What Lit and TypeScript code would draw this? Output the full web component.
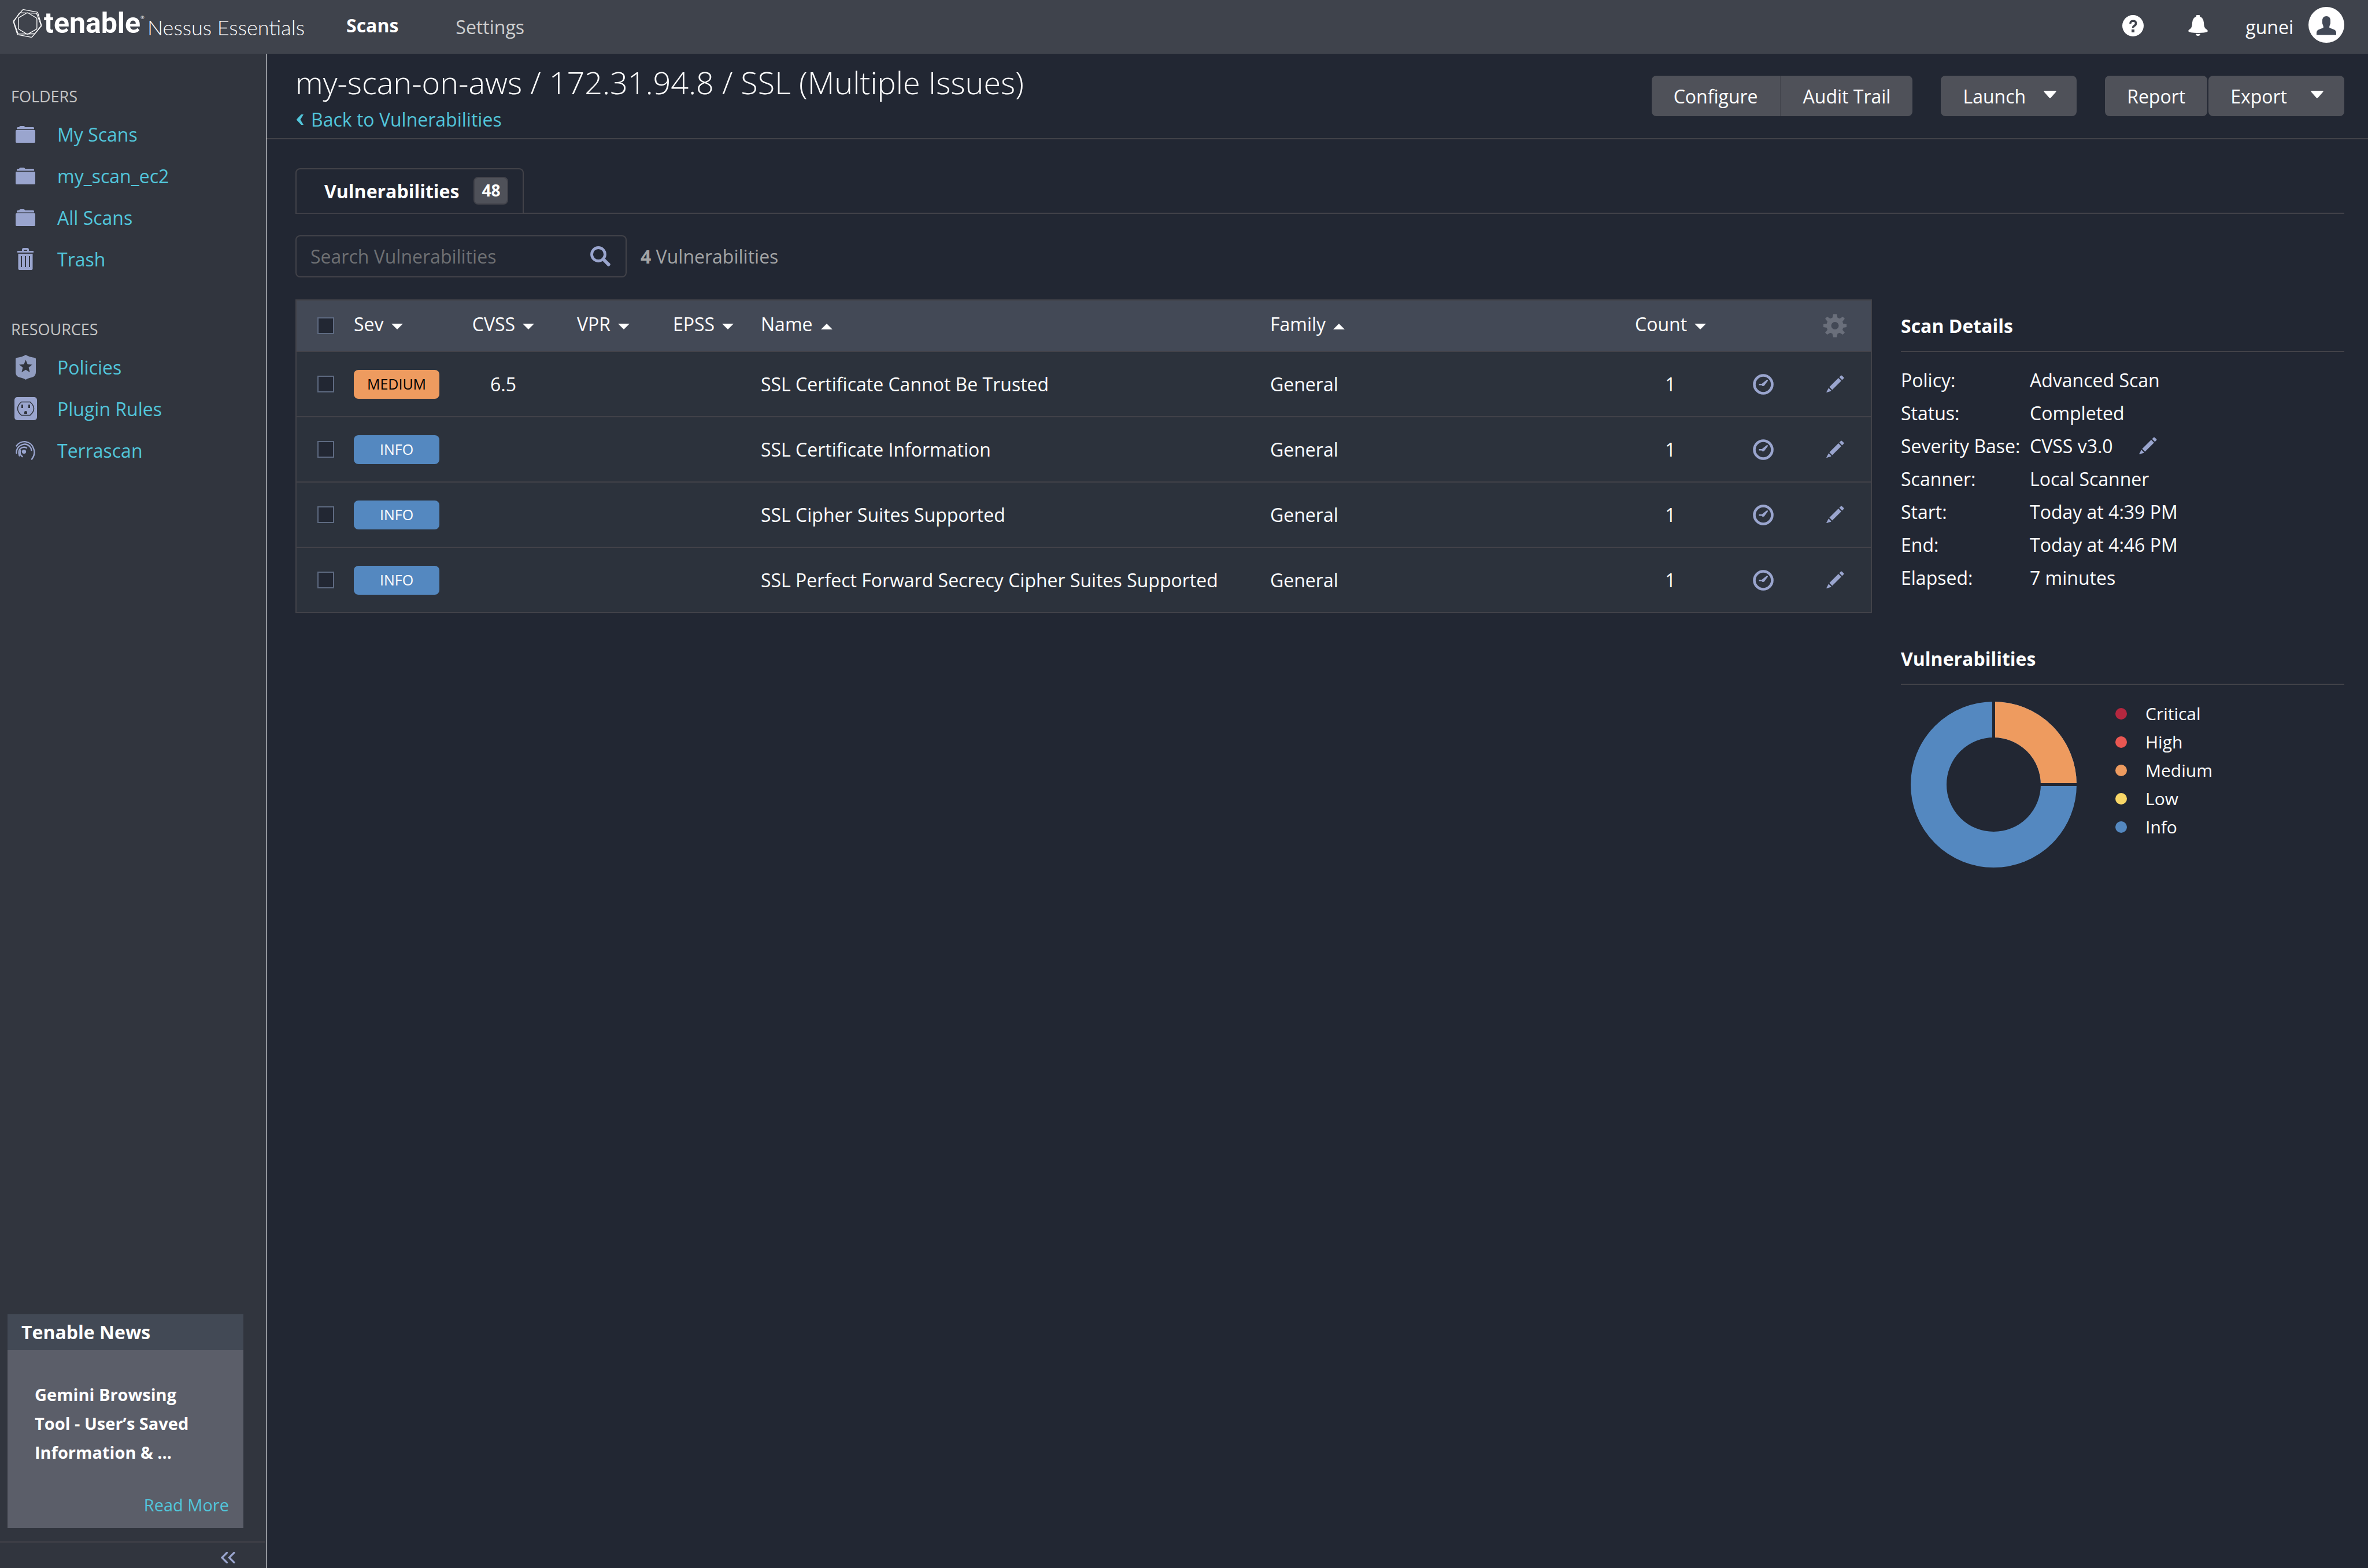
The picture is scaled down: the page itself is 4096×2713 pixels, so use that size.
import { LitElement, html, css, svg, nothing } from "lit";
import { customElement, property } from "lit/decorators.js";
import { classMap } from "lit/directives/class-map.js";

type Finding = { severity: "medium" | "info"; cvss: string; name: string; family: string; count: number };

const FINDINGS: Finding[] = [
  { severity: "medium", cvss: "6.5", name: "SSL Certificate Cannot Be Trusted", family: "General", count: 1 },
  { severity: "info", cvss: "", name: "SSL Certificate Information", family: "General", count: 1 },
  { severity: "info", cvss: "", name: "SSL Cipher Suites Supported", family: "General", count: 1 },
  { severity: "info", cvss: "", name: "SSL Perfect Forward Secrecy Cipher Suites Supported", family: "General", count: 1 },
];

const COLUMNS = [
  { label: "Sev", dir: "down", cls: "sev" },
  { label: "CVSS", dir: "down", cls: "score" },
  { label: "VPR", dir: "down", cls: "score" },
  { label: "EPSS", dir: "down", cls: "score" },
  { label: "Name", dir: "up", cls: "name" },
  { label: "Family", dir: "up", cls: "family" },
  { label: "Count", dir: "down", cls: "count" },
];

const DETAILS = [
  { label: "Policy:", value: "Advanced Scan" },
  { label: "Status:", value: "Completed" },
  { label: "Severity Base:", value: "CVSS v3.0", editable: true },
  { label: "Scanner:", value: "Local Scanner" },
  { label: "Start:", value: "Today at 4:39 PM" },
  { label: "End:", value: "Today at 4:46 PM" },
  { label: "Elapsed:", value: "7 minutes" },
];

const LEGEND = ["Critical", "High", "Medium", "Low", "Info"];

const logo = html`<svg class="mark" viewBox="0 0 156 154" aria-hidden="true">
  <g fill="none" stroke="#fff" stroke-width="4" stroke-linejoin="round">
    <path d="M57 4 L128 17 Q132 18 133 22 L152 86 Q153 89 151 92 L103 148 Q101 151 97 150 L29 137 Q25 136 24 132 L4 70 Q3 66 5 63 L52 6 Q54 3 57 4Z" />
    <path d="M39 21 L121 23 Q125 23 127 26 L149 84 Q151 88 148 92 L120 128 Q117 132 113 132 L33 133 Q29 133 27 129 L7 72 Q6 68 8 64 L33 25 Q35 21 39 21Z" />
    <path d="M82 22 L125 48 Q128 50 128 54 V102 Q128 106 125 108 L81 133 Q78 135 74 133 L33 108 Q30 106 30 102 V52 Q30 48 33 46 L74 22 Q78 20 82 22Z" />
  </g>
</svg>`;

const folder = html`<svg class="icon" viewBox="0 0 34 29" width="34" height="29" aria-hidden="true">
  <path d="M2 5.500V3.500Q2 2 4 2H6L7 .5Q7.500 0 8.500 0H14Q15 0 15.500.7L16.500 2H30.500Q32 2 32 3.500V5.500Z" />
  <path d="M0 9Q0 7 1.500 7H32.500Q34 7 34 9V27Q34 29 32.500 29H1.500Q0 29 0 27Z" />
</svg>`;

const trash = html`<svg class="icon" viewBox="0 0 28 38" width="28" height="38" aria-hidden="true">
  <path d="M8 5V3Q8 0 11 0H17Q20 0 20 3V5H28V8H0V5ZM11 5H17V3.500H11Z" fill-rule="evenodd" />
  <path d="M1.500 10H26.500V36Q26.500 38 24.500 38H3.500Q1.500 38 1.500 36ZM6 14V33H8V14ZM13 14V33H15V14ZM20 14V33H22V14Z" fill-rule="evenodd" />
</svg>`;

const shield = html`<svg class="icon dim" viewBox="0 0 35 43" width="35" height="43" aria-hidden="true">
  <path fill-rule="evenodd" d="M17.500 0Q24 4 33 5Q35 5.200 35 7V30Q35 37 28 39Q21 40.500 17.500 43Q14 40.500 7 39Q0 37 0 30V7Q0 5.200 2 5Q11 4 17.500 0ZM17.500 8.500L20.600 16.300L29 16.800L22.500 22.100L24.700 30.200L17.500 25.700L10.300 30.200L12.500 22.100L6 16.800L14.400 16.300Z" />
</svg>`;

const plug = html`<svg class="icon" viewBox="0 0 39 40" width="39" height="40" aria-hidden="true">
  <rect width="39" height="40" rx="5" />
  <path d="M12 8.500H27Q33.500 14 33.500 20T27 31.500H12Q5.500 26 5.500 20T12 8.500Z" fill="none" stroke="#31353e" stroke-width="1.600" />
  <path d="M12 13H15V19H12ZM24 13H27V19H24ZM17 29V26.500Q17 24 19.500 24T22 26.500V29Z" fill="#31353e" />
</svg>`;

const radar = html`<svg class="icon" viewBox="0 0 34 33" width="34" height="33" aria-hidden="true">
  <circle cx="14.500" cy="18.500" r="3.600" />
  <g fill="none" stroke="#9aa5ce" stroke-width="2.400" stroke-linecap="round">
    <path d="M1.500 8.500A16.500 16.500 0 0 1 31 13Q35 22 28 31.500" />
    <path d="M1.500 21Q1 12 8 8Q17 2.500 24 9Q27 12 27.500 16" />
    <path d="M6.500 25.500Q3.500 16 9.500 12.200Q14.500 9.500 19 12" />
    <path d="M11.500 27Q6 22.500 8.500 17" />
  </g>
</svg>`;

const pencil = svg`<path d="M22.500 3.500L25.300 .8Q26.200 0 27.100 .9L30 3.800Q31 4.800 30.100 5.700L27.400 8.400ZM21 5L25.900 9.900L10.300 25.400L5.400 20.500ZM4 22.200L8.700 27L7.500 28Q4.500 28.600 1 30Q0 30.400 .3 29.200Z" />`;
const pencilIcon = html`<svg class="icon" viewBox="0 0 31 31" width="31" height="31" aria-hidden="true">${pencil}</svg>`;

const clock = html`<svg class="icon" viewBox="0 0 36 36" width="36" height="36" aria-hidden="true">
  <circle cx="18" cy="18" r="15.500" fill="none" stroke="#9aa5ce" stroke-width="4.600" />
  <path d="M10.500 17H15.500L24 10.200Q26 9.200 26 11.800L20.800 18.800Q19.800 21 17.800 21Q16 21 15.200 19.500H10.500Z" />
</svg>`;

const gear = html`<svg class="gear" viewBox="-20 -20.500 40 41" width="40" height="41" aria-hidden="true">
  <path fill-rule="evenodd" d="M-3-20H3L4.500-13.800L8.200-12.300L13.500-15.500L17-12L13-7.200L14.200-3.500L20-2.500V2.500L14.200 3.500L13 7.200L17 12L13.500 15.500L8.200 12.300L4.500 13.800L3 20H-3L-4.500 13.800L-8.200 12.300L-13.500 15.500L-17 12L-13 7.200L-14.200 3.500L-20 2.500V-2.500L-14.200-3.500L-13-7.200L-17-12L-13.500-15.500L-8.200-12.300L-4.500-13.800ZM-6.500 0A6.500 6.500 0 1 0 6.500 0A6.500 6.500 0 1 0-6.500 0Z" />
</svg>`;

const magnifier = html`<svg class="icon" viewBox="0 0 35 35" width="35" height="35" aria-hidden="true">
  <circle cx="14" cy="14" r="11.500" fill="none" stroke="#9aa5ce" stroke-width="4.800" />
  <path d="M20 24L24 20L34.200 30Q35.500 31.500 34.200 33L33 34.200Q31.500 35.500 30 34.200Z" />
</svg>`;

const help = html`<svg viewBox="0 0 37 37" width="37" height="37" aria-hidden="true">
  <circle cx="18.500" cy="18.500" r="18.500" fill="#fff" />
  <path d="M14 15Q13.500 10.300 18.700 10.300T23.500 14.500Q23.500 17 21 18.500T18.700 22" fill="none" stroke="#3f434c" stroke-width="3.600" />
  <rect x="16" y="25" width="5" height="5" fill="#3f434c" />
</svg>`;

const bell = html`<svg viewBox="0 0 34 36" width="34" height="36" aria-hidden="true" fill="#fff">
  <path d="M15 0H19Q20 0 20 1V2.500Q26.500 5 27 13Q27.200 21 30 23.500Q34 26 34 28Q32 31 17 31T0 28Q0 26 4 23.500Q6.800 21 7 13Q7.500 5 14 2.500V1Q14 0 15 0Z" />
  <path d="M13 32.500Q17 33 21 32.500Q20.500 36 17 36T13 32.500Z" />
</svg>`;

const avatar = html`<svg viewBox="0 0 62 62" width="62" height="62" aria-hidden="true">
  <circle cx="31" cy="31" r="31" fill="#fff" />
  <path d="M31 16Q38 16 38 24V28Q38 30 37 31L36 35Q36 36 38 36.800L45 39.500Q48 41 48 45V48.500H14V45Q14 41 17 39.500L24 36.800Q26 36 26 35L25 31Q24 30 24 28V24Q24 16 31 16Z" fill="#424957" />
</svg>`;

const caretDown = html`<svg class="caret" viewBox="0 0 22 13" width="22" height="13" aria-hidden="true">
  <path d="M2 0H20Q22 0 21.500 1.800L12.500 12Q11 13.500 9.500 12L.5 1.800Q0 0 2 0Z" fill="#fff" />
</svg>`;

@customElement("sort-caret")
class SortCaret extends LitElement {
  @property() dir = "down";
  static styles = css`
    :host { display: block; }
    svg { display: block; fill: #fff; }
  `;
  render() {
    return html`<svg viewBox="0 0 20 10" width="20" height="10" aria-hidden="true">
      <path d=${this.dir === "up" ? "M0 10L10 0L20 10Z" : "M0 0H20L10 10Z"} />
    </svg>`;
  }
}

@customElement("severity-donut")
class SeverityDonut extends LitElement {
  static styles = css`
    :host { display: block; }
    svg { display: block; }
  `;
  render() {
    return html`<svg viewBox="0 0 287 287" width="287" height="287" role="img" aria-label="Vulnerabilities">
      <g fill="none" stroke-width="62">
        <circle cx="143.500" cy="143.500" r="112.500" stroke="#5488c0" />
        <path d="M143.500 31A112.500 112.500 0 0 1 256 143.500" stroke="#ee9b5f" />
      </g>
      <path d="M143.500 0V143.500H287" fill="none" stroke="#222733" stroke-width="5" />
    </svg>`;
  }
}

@customElement("app-root")
class AppRoot extends LitElement {
  static styles = css`
    :host {
      display: grid;
      grid-template-rows: 93px 1fr;
      min-height: 100vh;
      background: #222733;
      color: #fff;
      font: 32px/57px "Open Sans", "Noto Sans", sans-serif;
    }
    * { box-sizing: border-box; }
    svg { display: block; flex: none; }
    a { color: #52c6db; text-decoration: none; }
    button { font: inherit; color: inherit; background: none; border: 0; padding: 0; margin: 0; display: flex; align-items: center; }
    h1, h2, h3, p, ul, dl, dd { margin: 0; padding: 0; }
    ul { list-style: none; }
    .icon { fill: #9aa5ce; }
    .icon.dim { fill: #919dc0; }

    .topbar { display: flex; align-items: center; background: #3f434c; padding: 0 41px 0 22px; }
    .brand { display: flex; align-items: center; width: 577px; color: #fff; }
    .logo { display: flex; align-items: center; padding-bottom: 12px; width: 233px; }
    .mark { width: 51px; height: 51px; margin-right: 3px; }
    .wordmark { font: 700 50px/51px Roboto, sans-serif; }
    .reg { font-size: 8px; line-height: 10px; align-self: flex-start; margin-top: 10px; }
    .product { font: 300 36px/42px Lato, sans-serif; white-space: nowrap; }
    .nav { display: flex; align-items: center; gap: 99px; flex: 1; }
    .nav a { color: #cdcecf; }
    .nav a.active { color: #fff; font-weight: 700; padding-bottom: 7px; }
    .tools { display: flex; align-items: center; }
    .tools .bell { margin: 0 65px 0 77px; }
    .tools .help, .tools .bell { padding-bottom: 5px; }
    .user { gap: 26px; }
    .user svg { margin-bottom: 8px; }

    .shell { display: grid; grid-template-columns: 461px 1fr; }
    .side { display: flex; flex-direction: column; background: #31353e; border-right: 1px solid #f4f5f6; box-shadow: inset -2px 0 0 #3b3f48; padding-top: 44px; }
    .side h2 { font-size: 27px; line-height: 59px; font-weight: 400; color: #c5c5c5; padding-left: 19px; }
    .side ul { margin-bottom: 56px; }
    .side li a { display: grid; grid-template-columns: 50px 1fr; column-gap: 30px; align-items: center; height: 72px; padding-left: 19px; }
    .side li .icon { justify-self: center; }
    .news { margin: auto 39px 23px 13px; background: #5b5e69; }
    .news h3 { background: #424955; font-size: 32px; line-height: 62px; font-weight: 700; padding-left: 24px; }
    .news p { font-size: 29px; line-height: 50px; font-weight: 700; padding: 52px 47px 41px; white-space: nowrap; }
    .news a { display: block; font-size: 29px; line-height: 50px; text-align: right; padding: 0 25px 15px; }
    .collapse { border-top: 2px solid #424249; height: 46px; padding: 7px 51px 0 0; justify-content: flex-end; margin-right: 2px; }

    .pagehead { display: flex; justify-content: space-between; align-items: center; height: 148px; padding: 0 41px 0 50px; border-bottom: 2px solid #424249; }
    .titles { padding-top: 13px; align-self: flex-start; }
    .titles h1 { font-size: 54px; line-height: 72px; font-weight: 300; white-space: nowrap; }
    .titles a { display: flex; align-items: center; gap: 13px; line-height: 58px; padding-left: 2px; }
    .actions { display: flex; }
    .actions button { height: 70px; background: #4f5159; border-radius: 8px; padding: 0 38px; }
    .actions .first { border-radius: 8px 0 0 8px; border-right: 2px solid #44464e; }
    .actions .second { border-radius: 0 8px 8px 0; }
    .actions .gap { margin-left: 49px; }
    .actions .menu { gap: 31px; padding-right: 35px; }
    .actions .wide { gap: 41px; margin-left: 2px; padding-right: 36px; }
    .actions .caret { margin-bottom: 6px; }

    .content { padding: 50px 41px 0 50px; }
    .tabs { display: flex; }
    .tab { display: flex; align-items: center; gap: 25px; height: 79px; font-weight: 700; border: 2px solid #424249; border-bottom-width: 1px; border-radius: 8px 8px 0 0; padding: 0 25px 2px 48px; }
    .badge { min-width: 60px; height: 48px; font-size: 28px; line-height: 42px; text-align: center; background: #4f5159; border: 2px solid #42434b; border-radius: 8px; }
    .rule { flex: 1; border-bottom: 2px solid #424249; }
    .filters { display: flex; align-items: center; gap: 24px; margin: 37px 0 38px; color: #a3a4a5; }
    .search { display: flex; align-items: center; width: 573px; height: 73px; border: 2px solid #424249; border-radius: 8px; padding: 0 26px 0 24px; }
    .search input { flex: 1; min-width: 0; background: none; border: 0; outline: 0; padding: 0; font: inherit; color: #fff; }
    .search input::placeholder { color: #6e7073; opacity: 1; }

    .columns { display: grid; grid-template-columns: 1fr 767px; column-gap: 50px; align-items: start; }
    table { width: 100%; table-layout: fixed; border-collapse: separate; border-spacing: 0; border: 2px solid #424249; line-height: 44px; }
    th, td { padding: 0 0 0 13px; border-bottom: 2px solid #424249; text-align: left; font-weight: 400; vertical-align: middle; white-space: nowrap; }
    th { background: #434956; height: 89px; }
    td { background: #2c323c; height: 113px; }
    tbody tr:last-child td { border-bottom: 0; height: 111px; }
    th.check { width: 86px; }
    th.sev { width: 185px; }
    th.score { width: 173px; }
    th.family { width: 607px; }
    th.count { width: 197px; }
    th.tool { width: 124px; }
    .check { padding-left: 36px; }
    .score, .count, .tool { padding: 0; text-align: center; }
    th button { display: inline-flex; gap: 13px; padding-bottom: 6px; vertical-align: middle; }
    th.name button { gap: 15px; }
    th sort-caret { margin-top: 8px; }
    .tool button { display: flex; padding: 0; margin: 0 auto; }
    .gear { fill: #6a6f7b; }
    input[type="checkbox"] { appearance: none; display: block; width: 29px; height: 29px; margin: 0; background: #222733; border: 2px solid #5e6a81; }
    .pill { display: block; width: 148px; height: 50px; border-radius: 8px; font-size: 25px; line-height: 49px; text-align: center; text-transform: uppercase; }
    .pill.medium { background: #ee9b5f; color: #000; }
    .pill.info { background: #5488c0; }

    .panel { margin-bottom: 66px; }
    .panel h2 { font-size: 32px; line-height: 87px; font-weight: 700; padding-top: 2px; border-bottom: 2px solid #424249; }
    .facts { display: grid; grid-template-columns: 223px 1fr; padding-top: 20px; }
    .facts dt { white-space: nowrap; }
    .facts dd { display: flex; align-items: center; gap: 45px; }
    .chart { display: flex; padding: 25px 0 0 17px; gap: 67px; }
    .chart severity-donut { margin-top: 4px; }
    .legend li { display: flex; align-items: center; gap: 32px; font-size: 30px; line-height: 49px; }
    .dot { width: 20px; height: 20px; border-radius: 50%; }
    .dot.critical { background: #b5273f; }
    .dot.high { background: #ea5752; }
    .dot.medium { background: #ee9b5f; }
    .dot.low { background: #f9d767; }
    .dot.info { background: #5488c0; }
  `;

  private sideList(items: { label: string; icon: unknown }[]) {
    return html`<ul>
      ${items.map((i) => html`<li><a href="#">${i.icon}<span>${i.label}</span></a></li>`)}
    </ul>`;
  }

  private row(f: Finding) {
    return html`<tr>
      <td class="check"><input type="checkbox" aria-label=${f.name} /></td>
      <td><span class=${classMap({ pill: true, [f.severity]: true })}>${f.severity}</span></td>
      <td class="score">${f.cvss}</td>
      <td class="score"></td>
      <td class="score"></td>
      <td>${f.name}</td>
      <td>${f.family}</td>
      <td class="count">${f.count}</td>
      <td class="tool"><button aria-label="Snooze">${clock}</button></td>
      <td class="tool"><button aria-label="Modify">${pencilIcon}</button></td>
    </tr>`;
  }

  render() {
    return html`
      <header class="topbar">
        <a class="brand" href="#">
          <span class="logo">${logo}<span class="wordmark">tenable</span><span class="reg">®</span></span>
          <span class="product">Nessus Essentials</span>
        </a>
        <nav class="nav"><a class="active" href="#">Scans</a><a href="#">Settings</a></nav>
        <div class="tools">
          <button class="help" aria-label="Help">${help}</button>
          <button class="bell" aria-label="Notifications">${bell}</button>
          <button class="user"><span>gunei</span>${avatar}</button>
        </div>
      </header>
      <div class="shell">
        <aside class="side">
          <h2>FOLDERS</h2>
          ${this.sideList([
            { label: "My Scans", icon: folder },
            { label: "my_scan_ec2", icon: folder },
            { label: "All Scans", icon: folder },
            { label: "Trash", icon: trash },
          ])}
          <h2>RESOURCES</h2>
          ${this.sideList([
            { label: "Policies", icon: shield },
            { label: "Plugin Rules", icon: plug },
            { label: "Terrascan", icon: radar },
          ])}
          <section class="news">
            <h3>Tenable News</h3>
            <p>Gemini Browsing<br />Tool - User’s Saved<br />Information &amp; ...</p>
            <a href="#">Read More</a>
          </section>
          <button class="collapse" aria-label="Collapse">
            <svg viewBox="0 0 25 20" width="25" height="20" aria-hidden="true">
              <path d="M10.500 1.500L2 10L10.500 18.500M23 1.500L14.500 10L23 18.500" fill="none" stroke="#9aa5ce" stroke-width="3.200" stroke-linecap="round" />
            </svg>
          </button>
        </aside>
        <main>
          <div class="pagehead">
            <div class="titles">
              <h1>my-scan-on-aws / 172.31.94.8 / SSL (Multiple Issues)</h1>
              <a href="#">
                <svg viewBox="0 0 12 18" width="12" height="18" aria-hidden="true">
                  <path d="M8 0H12L6.500 9L12 18H8L.5 10Q-.3 9 .5 8Z" fill="#52c6db" />
                </svg>
                <span>Back to Vulnerabilities</span>
              </a>
            </div>
            <div class="actions">
              <button class="first">Configure</button>
              <button class="second">Audit Trail</button>
              <button class="menu gap">Launch ${caretDown}</button>
              <button class="gap">Report</button>
              <button class="menu wide">Export ${caretDown}</button>
            </div>
          </div>
          <div class="content">
            <div class="tabs">
              <button class="tab">Vulnerabilities <span class="badge">48</span></button>
              <div class="rule"></div>
            </div>
            <div class="filters">
              <label class="search"><input type="text" placeholder="Search Vulnerabilities" aria-label="Search Vulnerabilities" />${magnifier}</label>
              <span><b>4</b> Vulnerabilities</span>
            </div>
            <div class="columns">
              <table>
                <thead>
                  <tr>
                    <th class="check"><input type="checkbox" aria-label="Select all" /></th>
                    ${COLUMNS.map(
                      (c) => html`<th class=${c.cls}><button>${c.label}<sort-caret dir=${c.dir}></sort-caret></button></th>`,
                    )}
                    <th class="tool"></th>
                    <th class="tool"><button aria-label="Columns">${gear}</button></th>
                  </tr>
                </thead>
                <tbody>
                  ${FINDINGS.map((f) => this.row(f))}
                </tbody>
              </table>
              <aside>
                <section class="panel">
                  <h2>Scan Details</h2>
                  <dl class="facts">
                    ${DETAILS.map(
                      (d) => html`<dt>${d.label}</dt>
                        <dd>${d.value}${d.editable ? html`<button aria-label="Edit">${pencilIcon}</button>` : nothing}</dd>`,
                    )}
                  </dl>
                </section>
                <section class="panel">
                  <h2>Vulnerabilities</h2>
                  <div class="chart">
                    <severity-donut></severity-donut>
                    <ul class="legend">
                      ${LEGEND.map((l) => html`<li><span class="dot ${l.toLowerCase()}"></span>${l}</li>`)}
                    </ul>
                  </div>
                </section>
              </aside>
            </div>
          </div>
        </main>
      </div>
    `;
  }
}
